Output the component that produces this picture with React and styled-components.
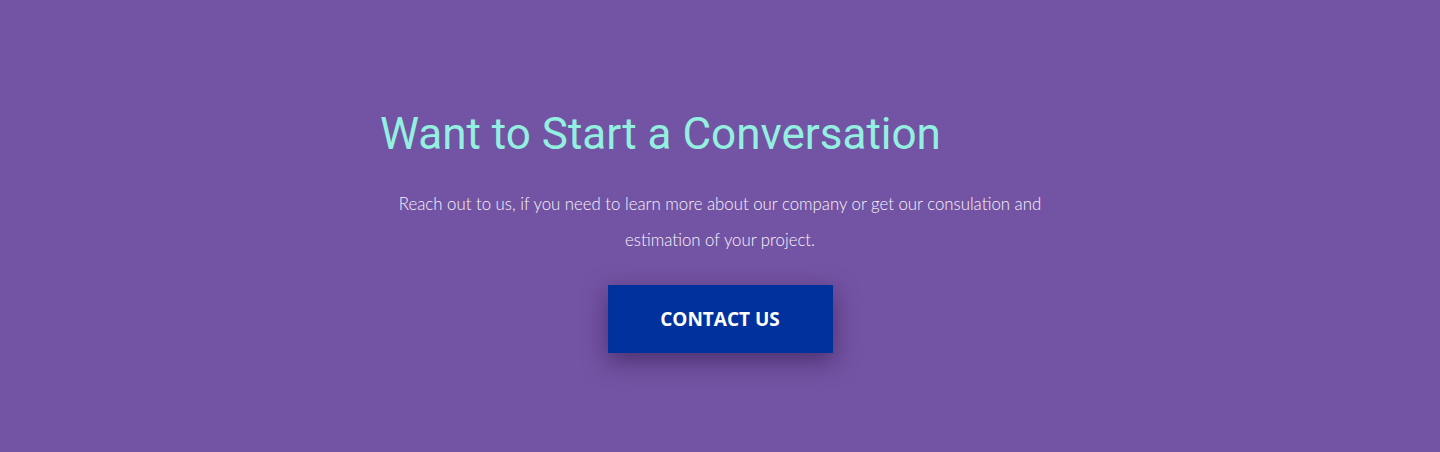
import styled, { createGlobalStyle } from 'styled-components';

const GlobalStyle = createGlobalStyle`
    body {
        margin: 0;
        background: #7353a3;
    }
`;

const Section = styled.section`
    display: flex;
    justify-content: center;
    background: #7353a3;
    width: 100%;
    height: 452px;
    padding-top: 105px;
    box-sizing: border-box;
`;

const Container = styled.div`
    display: flex;
    flex-direction: column;
    width: 680px;
`;

const Title = styled.h2`
    margin: 0;
    font-family: Roboto, "Liberation Sans", sans-serif;
    font-weight: 400;
    font-size: 44px;
    line-height: 58px;
    color: #93f0e0;
    text-align: left;
`;

const Text = styled.p`
    margin: 23px 0 0;
    font-family: Lato, "Open Sans", sans-serif;
    font-weight: 300;
    font-size: 16.8px;
    line-height: 36px;
    color: #f8f4fc;
    text-align: center;
`;

const Button = styled.a`
    align-self: center;
    display: flex;
    align-items: center;
    justify-content: center;
    margin-top: 27px;
    width: 225px;
    height: 68px;
    background: #00319c;
    color: #ffffff;
    font-family: "Open Sans", sans-serif;
    font-weight: 700;
    font-size: 19px;
    text-decoration: none;
    box-shadow: 0 8px 24px rgba(40, 20, 70, 0.55);
`;

function App() {
    return (
        <>
            <GlobalStyle />
            <Section>
                <Container>
                    <Title>Want to Start a Conversation</Title>
                    <Text>
                        Reach out to us, if you need to learn more about our company or get our consulation and
                        estimation of your project.
                    </Text>
                    <Button href="#">CONTACT US</Button>
                </Container>
            </Section>
        </>
    )
}

export default App
